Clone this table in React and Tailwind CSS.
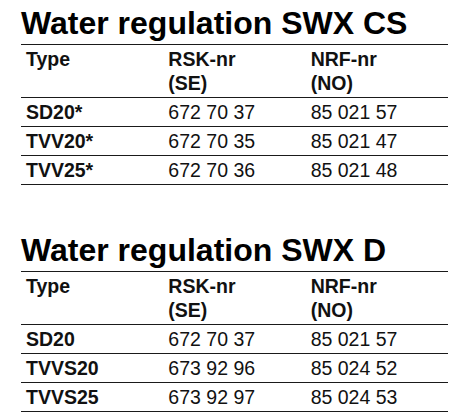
import React from 'react';

const sections = [
  {
    title: 'Water regulation SWX CS',
    rows: [
      ['SD20*', '672 70 37', '85 021 57'],
      ['TVV20*', '672 70 35', '85 021 47'],
      ['TVV25*', '672 70 36', '85 021 48'],
    ],
  },
  {
    title: 'Water regulation SWX D',
    rows: [
      ['SD20', '672 70 37', '85 021 57'],
      ['TVVS20', '673 92 96', '85 024 52'],
      ['TVVS25', '673 92 97', '85 024 53'],
    ],
  },
];

function Section({ title, rows }) {
  return (
    <div>
      <h2 className="text-[32px] leading-[36px] font-bold text-black mb-[3px]">{title}</h2>
      <div className="border-t border-[#1a1a1a]">
        <div className="grid grid-cols-3 font-bold text-[19.5px] leading-[24px] py-[2px] border-b border-[#1a1a1a]">
          <div className="px-[5px]">Type</div>
          <div className="px-[5px]">RSK-nr<br />(SE)</div>
          <div className="px-[5px]">NRF-nr<br />(NO)</div>
        </div>
        {rows.map((r) => (
          <div key={r[0]} className="grid grid-cols-3 text-[19.5px] leading-[28px] border-b border-[#1a1a1a]">
            <div className="px-[5px] font-bold">{r[0]}</div>
            <div className="px-[5px]">{r[1]}</div>
            <div className="px-[5px]">{r[2]}</div>
          </div>
        ))}
      </div>
    </div>
  );
}

export default function App() {
  return (
    <div className="w-[476px] h-[417px] bg-white text-[#111] pt-[5px] pl-[21px]" style={{ fontFamily: '"Liberation Sans", Arial, sans-serif' }}>
      <div className="w-[427px] flex flex-col gap-[47px]">
        {sections.map((s) => (
          <Section key={s.title} {...s} />
        ))}
      </div>
    </div>
  );
}
